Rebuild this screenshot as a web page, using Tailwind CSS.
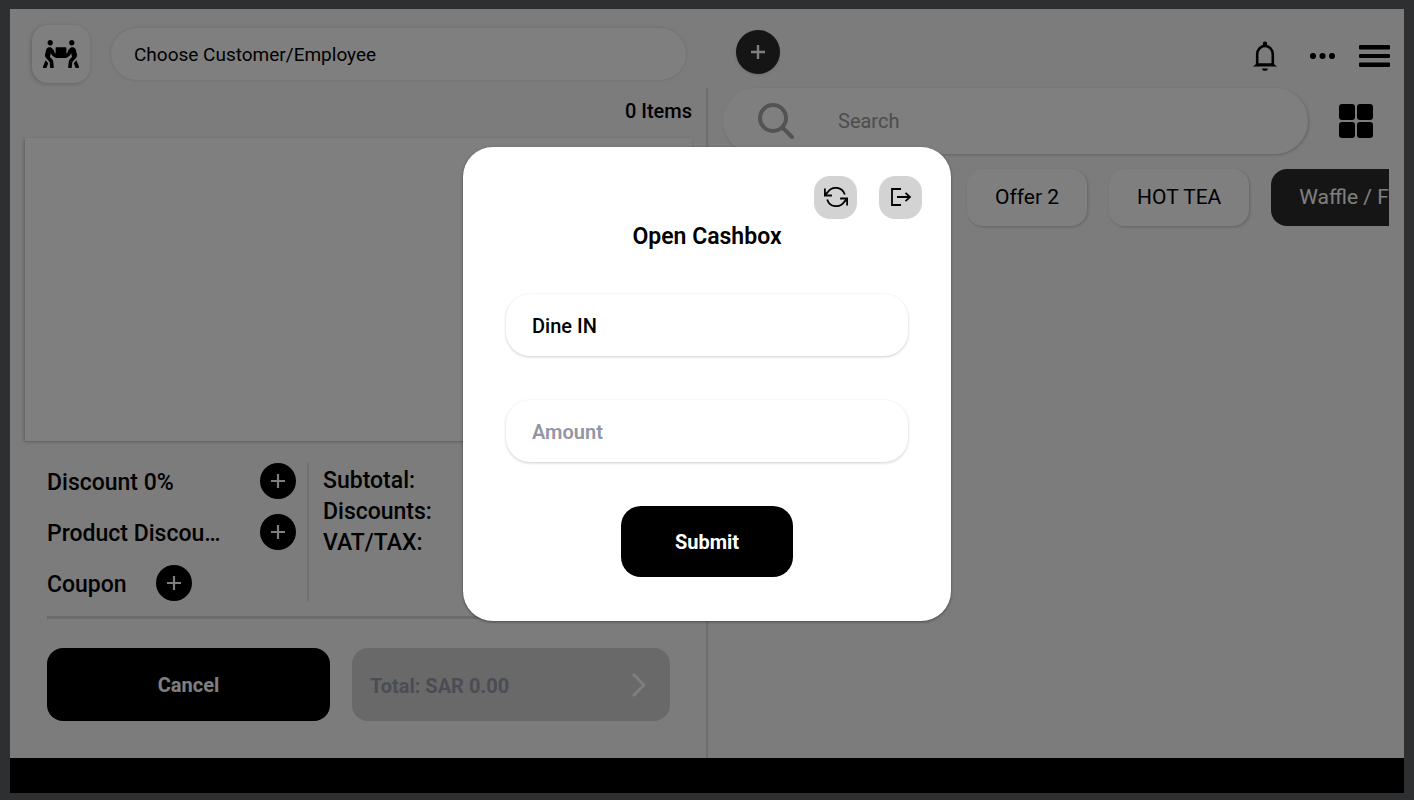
<!DOCTYPE html>
<html lang="en">

<head>
    <meta charset="UTF-8">
    <meta name="viewport" content="width=device-width, initial-scale=1.0">
    <title>Open Cashbox</title>
    <script src="https://cdn.jsdelivr.net/npm/@tailwindcss/browser@4"></script>
</head>

<body class="flex min-h-screen flex-col bg-[#2e2f31] px-[10px] pt-[9px] pb-[7px] font-['Roboto',sans-serif] text-black">
    <div class="relative flex flex-1 flex-col bg-[#f8f8f8]">

        <!-- Top bar -->
        <header class="grid grid-cols-2 pt-4 pb-[5px]">
            <div class="flex items-center gap-[21px] pr-[21px] pl-[22px]">
                <button type="button" aria-label="Dine in service"
                    class="flex size-[58px] items-center justify-center rounded-2xl bg-white shadow-[-1px_1px_4px_rgba(0,0,0,0.2)]">
                    <svg class="w-9" viewBox="0 0 640 512" fill="currentColor">
                        <path d="M128 96c26.5 0 48-21.5 48-48S154.5 0 128 0 80 21.5 80 48s21.5 48 48 48zm384 0c26.5 0 48-21.5 48-48S538.5 0 512 0s-48 21.5-48 48 21.5 48 48 48zm125.7 372.1l-44-110-41.1 46.4-2 18.2 27.7 69.2c5 12.5 17 20.1 29.7 20.1 4 0 8-.7 11.9-2.3 16.4-6.6 24.4-25.2 17.8-41.6zm-34.2-209.8L585 178.1c-4.6-20-18.6-36.8-37.5-44.9-18.5-8-39-6.7-56.1 3.3-22.7 13.4-39.7 34.5-48.1 59.4L432 229.8 416 240v-96c0-8.8-7.2-16-16-16H240c-8.8 0-16 7.2-16 16v96l-16.1-10.2-11.3-33.9c-8.3-25-25.4-46-48.1-59.4-17.2-10-37.6-11.3-56.1-3.3-18.9 8.1-32.9 24.9-37.5 44.9l-18.4 80.2c-4.6 20 .7 41.2 14.4 56.7l67.2 75.9 10.1 92.6C130 499.8 143.8 512 160 512c1.2 0 2.3-.1 3.5-.2 17.6-1.9 30.2-17.7 28.3-35.3l-10.1-92.8c-1.5-13-6.9-25.1-15.6-35l-43.3-49 17.6-70.3 6.8 20.4c4.1 12.5 11.9 23.4 24.5 32.6l51.1 32.5c4.6 2.9 12.1 4.6 17.2 5h160c5.1-.4 12.6-2.1 17.2-5l51.1-32.5c12.6-9.2 20.4-20 24.5-32.6l6.8-20.4 17.6 70.3-43.3 49c-8.7 9.9-14.1 22-15.6 35l-10.1 92.8c-1.9 17.6 10.8 33.4 28.3 35.3 1.2.1 2.3.2 3.5.2 16.1 0 30-12.1 31.8-28.5l10.1-92.6 67.2-75.9c13.6-15.5 19-36.7 14.4-56.7zM46.3 358.1l-44 110c-6.6 16.4 1.4 35 17.8 41.6 16.8 6.6 35.1-1.7 41.6-17.8l27.7-69.2-2-18.2-41.1-46.4z" />
                    </svg>
                </button>
                <select aria-label="Customer or employee"
                    class="h-[52px] min-w-0 flex-1 appearance-none rounded-full bg-white px-[23px] pt-[2px] text-[19px] shadow-[0_0_3px_rgba(0,0,0,0.15)]">
                    <option>Choose Customer/Employee</option>
                </select>
            </div>
            <div class="flex items-center justify-between pr-[14px] pl-[29px]">
                <button type="button" aria-label="Add customer"
                    class="mb-1 flex size-11 items-center justify-center rounded-full bg-[#2a2a2a] text-white shadow">
                    <svg class="size-4" viewBox="0 0 16 16" fill="none" stroke="currentColor" stroke-width="2.4">
                        <path d="M8 1v14M1 8h14" />
                    </svg>
                </button>
                <div class="mt-1 flex items-center">
                    <button type="button" aria-label="Notifications">
                        <svg class="h-[30px] w-6" viewBox="0 0 24 30" fill="none" stroke="currentColor" stroke-width="2.6">
                            <path d="M4.2 24V13.5a7.8 8.6 0 0 1 15.6 0V24" />
                            <path d="M12 .6a2.2 2.2 0 0 1 2.2 2.2l-.6 2.6h-3.2l-.6-2.6A2.2 2.2 0 0 1 12 .6zM0 25.6l4-3.4h16l4 3.4zM9.200 27.400h5.600a2.800 2.400 0 0 1-5.600 0z"
                                fill="currentColor" stroke="none" />
                        </svg>
                    </button>
                    <button type="button" aria-label="More" class="ml-[33px]">
                        <svg class="h-[6px] w-[25px]" viewBox="0 0 25 6" fill="currentColor">
                            <circle cx="3" cy="3" r="3" />
                            <circle cx="12.5" cy="3" r="3" />
                            <circle cx="22" cy="3" r="3" />
                        </svg>
                    </button>
                    <button type="button" aria-label="Menu" class="ml-6">
                        <svg class="h-6 w-[31px]" viewBox="0 0 31 24" fill="currentColor">
                            <rect y="1" width="31" height="4.5" rx="1" />
                            <rect y="10" width="31" height="4" rx="1" />
                            <rect y="18.5" width="31" height="4.5" rx="1" />
                        </svg>
                    </button>
                </div>
            </div>
        </header>

        <main class="grid flex-1 grid-cols-[minmax(0,1fr)_2px_minmax(0,1fr)]">
            <!-- Order -->
            <section class="flex flex-col">
                <p class="h-[50px] pt-[9px] pr-[14px] text-right text-xl font-medium">0 Items</p>
                <div class="mr-[14px] ml-[15px] flex-1 bg-white shadow-[-1px_1px_3px_rgba(0,0,0,0.25)]"></div>

                <div class="flex flex-col pt-[22px] pr-9 pb-[37px] pl-[37px] text-[23px] leading-8 font-medium">
                    <div class="flex">
                        <div class="flex w-[262px] flex-col gap-[15px] border-r-2 border-[#e2e2e2] pr-[11px]">
                            <div class="flex items-center justify-between">
                                <span class="pt-1">Discount 0%</span>
                                <button type="button" aria-label="Add discount"
                                    class="flex size-9 items-center justify-center rounded-full bg-black text-white">
                                    <svg class="size-4" viewBox="0 0 16 16" fill="none" stroke="currentColor" stroke-width="2.2">
                                        <path d="M8 1v14M1 8h14" />
                                    </svg>
                                </button>
                            </div>
                            <div class="flex items-center justify-between">
                                <span class="w-[178px] truncate pt-1">Product Discounts</span>
                                <button type="button" aria-label="Add product discount"
                                    class="flex size-9 items-center justify-center rounded-full bg-black text-white">
                                    <svg class="size-4" viewBox="0 0 16 16" fill="none" stroke="currentColor" stroke-width="2.2">
                                        <path d="M8 1v14M1 8h14" />
                                    </svg>
                                </button>
                            </div>
                            <div class="flex items-center gap-[29px]">
                                <span class="pt-1">Coupon</span>
                                <button type="button" aria-label="Add coupon"
                                    class="flex size-9 items-center justify-center rounded-full bg-black text-white">
                                    <svg class="size-4" viewBox="0 0 16 16" fill="none" stroke="currentColor" stroke-width="2.2">
                                        <path d="M8 1v14M1 8h14" />
                                    </svg>
                                </button>
                            </div>
                        </div>
                        <div class="pt-[2px] pl-[14px] leading-[31px]">
                            <p>Subtotal:</p>
                            <p>Discounts:</p>
                            <p>VAT/TAX:</p>
                        </div>
                    </div>
                    <hr class="mt-[15px] border-t-3 border-[#d8d8d8]">
                    <div class="mt-[29px] flex gap-[22px] text-xl font-bold">
                        <button type="button" class="h-[73px] w-[283px] rounded-2xl bg-black text-white">Cancel</button>
                        <button type="button"
                            class="flex h-[73px] flex-1 items-center justify-between rounded-2xl bg-[#d2d2d2] pr-6 pl-[18px] text-[#9699a8]">
                            <span class="pt-[2px]">Total: SAR 0.00</span>
                            <svg class="h-6 w-[14px] text-white" viewBox="0 0 14 24" fill="none" stroke="currentColor" stroke-width="2.6">
                                <path d="M1 1l11 11L1 23" />
                            </svg>
                        </button>
                    </div>
                </div>
            </section>

            <div class="bg-[#dcdcdc]"></div>

            <!-- Menu -->
            <section class="px-[15px]">
                <div class="flex items-center gap-[31px] pr-4">
                    <label class="flex h-[66px] flex-1 items-center gap-11 rounded-full bg-white pl-[35px] shadow-[1px_1px_3px_rgba(0,0,0,0.2)]">
                        <svg class="size-9 text-[#a6a6a6]" viewBox="0 0 36 36" fill="none" stroke="currentColor" stroke-width="4" stroke-linecap="round">
                            <circle cx="15" cy="15" r="13" />
                            <path d="M25 25l9 9" />
                        </svg>
                        <input type="search" aria-label="Search" placeholder="Search"
                            class="min-w-0 flex-1 bg-transparent text-xl outline-none placeholder:text-[#9a9a9a]">
                    </label>
                    <button type="button" aria-label="Grid view">
                        <svg class="size-[34px]" viewBox="0 0 34 34" fill="currentColor">
                            <rect width="16" height="16" rx="3" />
                            <rect x="18" width="16" height="16" rx="3" />
                            <rect y="18" width="16" height="16" rx="3" />
                            <rect x="18" y="18" width="16" height="16" rx="3" />
                        </svg>
                    </button>
                </div>
                <nav class="flex gap-[22px] overflow-hidden pt-[15px] pb-2 text-[21px] whitespace-nowrap">
                    <button type="button" class="h-[57px] shrink-0 rounded-2xl bg-white px-7 shadow-[1px_1px_3px_rgba(0,0,0,0.2)]">All</button>
                    <button type="button" class="h-[57px] shrink-0 rounded-2xl bg-white px-7 shadow-[1px_1px_3px_rgba(0,0,0,0.2)]">Offer 1</button>
                    <button type="button" class="h-[57px] shrink-0 rounded-2xl bg-white px-7 shadow-[1px_1px_3px_rgba(0,0,0,0.2)]">Offer 2</button>
                    <button type="button" class="h-[57px] shrink-0 rounded-2xl bg-white px-7 shadow-[1px_1px_3px_rgba(0,0,0,0.2)]">HOT TEA</button>
                    <button type="button" class="h-[57px] shrink-0 rounded-2xl bg-[#2a2a2a] px-7 text-white">Waffle / French</button>
                </nav>
            </section>
        </main>

        <!-- Cashbox dialog -->
        <div class="absolute inset-0 flex items-center justify-center bg-black/50">
            <form role="dialog" aria-labelledby="cashbox-title"
                class="flex w-[488px] flex-col rounded-[30px] bg-white pt-[29px] pb-11 shadow-[0_1px_3px_rgba(0,0,0,0.4)]">
                <div class="flex justify-end gap-[22px] pr-[29px]">
                    <button type="button" aria-label="Refresh" class="flex size-[43px] items-center justify-center rounded-2xl bg-[#d3d3d3]">
                        <svg class="h-[22px] w-6" viewBox="0 0 24 22" fill="none" stroke="currentColor" stroke-width="1.8">
                            <path d="M.9 2.500v7h7M1.200 9.200l2.500-3A9.500 9.500 0 0 1 20.800 8.600" />
                            <path d="M23.100 19.500v-7h-7M22.800 12.800l-2.500 3A9.500 9.500 0 0 1 3.200 13.400" />
                        </svg>
                    </button>
                    <button type="button" aria-label="Log out" class="flex size-[43px] items-center justify-center rounded-2xl bg-[#d3d3d3]">
                        <svg class="h-[18px] w-5" viewBox="0 0 20 18" fill="none" stroke="currentColor" stroke-width="1.8">
                            <path d="M10 1H1v16h9M6 9h13M14.500 4.800L19 9l-4.500 4.200" />
                        </svg>
                    </button>
                </div>
                <h1 id="cashbox-title" class="text-center text-[23px] leading-[35px] font-semibold">Open Cashbox</h1>
                <div class="flex flex-col gap-11 px-[43px] pt-10">
                    <select aria-label="Cashbox"
                        class="h-[62px] appearance-none rounded-3xl bg-white px-[26px] pt-[2px] text-xl font-medium shadow-[0_1px_3px_rgba(0,0,0,0.2)]">
                        <option>Dine IN</option>
                    </select>
                    <input type="text" inputmode="decimal" aria-label="Amount" placeholder="Amount"
                        class="h-[62px] rounded-3xl bg-white px-[26px] pt-[2px] text-xl font-semibold shadow-[0_1px_3px_rgba(0,0,0,0.2)] outline-none placeholder:text-[#9395a5]">
                    <button type="submit" class="h-[71px] w-[172px] self-center rounded-[20px] bg-black pt-[2px] text-xl font-bold text-white">Submit</button>
                </div>
            </form>
        </div>
    </div>

    <footer class="h-[35px] bg-black"></footer>
</body>

</html>
